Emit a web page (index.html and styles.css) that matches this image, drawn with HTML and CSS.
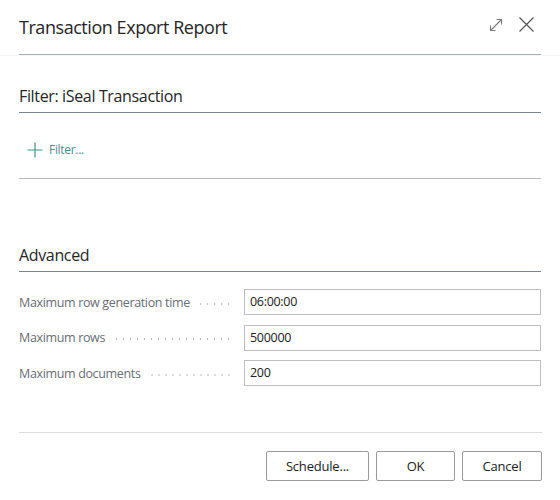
FILE: index.html
```html
<!DOCTYPE html>
<html>
<head>
<meta charset="utf-8">
<link rel="stylesheet" href="styles.css">
</head>
<body>
<div class="dialog">
  <header class="header">
    <div class="header-inner">
      <h1 class="title">Transaction Export Report</h1>
      <div class="header-actions">
        <svg class="icon-expand" width="16" height="16" viewBox="0 0 16 16" fill="none" stroke="#7a7a7a" stroke-width="1.1">
          <path d="M2.5 13.5 L13.5 2.5"/>
          <path d="M8.5 2.5 H13.5 V7.5"/>
          <path d="M2.5 8.5 V13.5 H7.5"/>
        </svg>
        <svg class="icon-close" width="17" height="17" viewBox="0 0 17 17" fill="none" stroke="#555" stroke-width="1.2">
          <path d="M1.5 1.5 L15.5 15.5 M15.5 1.5 L1.5 15.5"/>
        </svg>
      </div>
    </div>
  </header>

  <section class="section filter-section">
    <h2 class="section-title">Filter: iSeal Transaction</h2>
    <div class="filter-row">
      <svg class="icon-plus" width="16" height="16" viewBox="0 0 16 16" fill="none" stroke="#3f9494" stroke-width="1.2">
        <path d="M8 0.5 V15.5 M0.5 8 H15.5"/>
      </svg>
      <span class="filter-link">Filter...</span>
    </div>
  </section>

  <section class="section advanced-section">
    <h2 class="section-title">Advanced</h2>
    <div class="fields">
      <div class="field">
        <span class="label">Maximum row generation time</span>
        <span class="leader"></span>
        <div class="input">06:00:00</div>
      </div>
      <div class="field">
        <span class="label">Maximum rows</span>
        <span class="leader"></span>
        <div class="input">500000</div>
      </div>
      <div class="field">
        <span class="label">Maximum documents</span>
        <span class="leader"></span>
        <div class="input">200</div>
      </div>
    </div>
  </section>

  <footer class="footer">
    <button class="btn btn-schedule">Schedule...</button>
    <button class="btn btn-ok">OK</button>
    <button class="btn btn-cancel">Cancel</button>
  </footer>
</div>
</body>
</html>
```

FILE: styles.css
```css
* { box-sizing: border-box; }
html, body {
  margin: 0;
  padding: 0;
  background: #fff;
}
body {
  font-family: "Open Sans", "Noto Sans", sans-serif;
  color: #212121;
  width: 560px;
  height: 500px;
  overflow: hidden;
}
.dialog {
  display: flex;
  flex-direction: column;
}
.header {
  box-shadow: 0 1px 1px rgba(0,0,0,0.04);
}
.header-inner {
  margin: 0 19px;
  height: 55px;
  border-bottom: 1px solid #a7afb8;
  display: flex;
  align-items: flex-start;
  justify-content: space-between;
}
.title {
  margin: 0;
  font-size: 18px;
  font-weight: 400;
  line-height: 26px;
  padding-top: 14px;
  letter-spacing: -0.45px;
  color: #262626;
}
.header-actions {
  display: flex;
  align-items: center;
  gap: 14px;
  padding-top: 16px;
  margin-right: 6px;
}
.section {
  margin: 0 19px;
}
.section-title {
  margin: 0;
  font-size: 16px;
  font-weight: 400;
  line-height: 22px;
  border-bottom: 1px solid #7b8494;
  padding-bottom: 5px;
  letter-spacing: -0.35px;
  color: #262626;
}
.filter-section {
  padding-top: 30px;
  border-bottom: 1px solid #b7b9c0;
}
.filter-row {
  display: flex;
  align-items: center;
  height: 65px;
  padding-top: 8px;
  padding-left: 8px;
  gap: 6px;
}
.filter-link {
  color: #3f9494;
  font-size: 12px;
  letter-spacing: -0.3px;
}
.advanced-section {
  padding-top: 65px;
}
.fields {
  display: flex;
  flex-direction: column;
  gap: 9.5px;
  padding-top: 17px;
}
.field {
  display: flex;
  align-items: center;
  height: 26px;
}
.label {
  font-size: 12.5px;
  color: #6a6e75;
  white-space: nowrap;
  letter-spacing: -0.35px;
  padding-right: 6px;
}
.leader {
  flex: 1;
  height: 2px;
  margin-right: 12px;
  margin-top: 3px;
  background-image: radial-gradient(circle, #b9b9b9 0.7px, transparent 0.9px);
  background-size: 7px 2px;
  background-repeat: repeat-x;
  background-position: right center;
}
.input {
  width: 297px;
  height: 26px;
  border: 1px solid #bfbfbf;
  font-size: 12.5px;
  line-height: 24px;
  padding-left: 5px;
  color: #212121;
  letter-spacing: -0.3px;
}
.footer {
  margin: 46px 18px 0 19px;
  border-top: 1px solid #dcdcdc;
  padding-top: 18px;
  display: flex;
  justify-content: flex-end;
  gap: 7px;
}
.btn {
  font-family: "Open Sans", "Noto Sans", sans-serif;
  font-size: 13px;
  color: #212121;
  background: #fff;
  border: 1px solid #9a9a9a;
  border-radius: 2px;
  height: 30px;
  padding: 0;
  letter-spacing: -0.2px;
}
.btn-schedule { width: 103px; }
.btn-ok { width: 79px; }
.btn-cancel { width: 80px; }
```
